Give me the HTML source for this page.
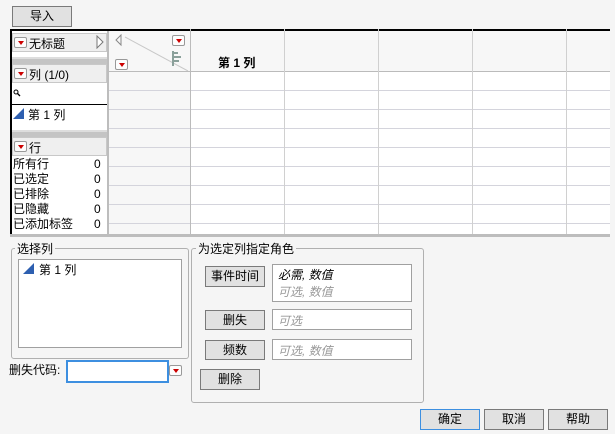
<!DOCTYPE html>
<html><head><meta charset="utf-8"><style>
*{box-sizing:border-box;margin:0;padding:0}
body{width:615px;height:434px;background:#f5f5f5;font-family:"Liberation Sans","Noto Sans CJK SC",sans-serif;font-size:12px;color:#000;position:relative;overflow:hidden}
.a{position:absolute}
.btn{position:absolute;background:#e1e1e1;border:1px solid #7a7a7a;text-align:center;font-size:12px}
.dd{position:absolute;width:13px;height:11px;background:#fdfdfd;border:1px solid #999;border-radius:2px}
.dd:after{content:"";position:absolute;left:3px;top:3px;border-left:3px solid transparent;border-right:3px solid transparent;border-top:4px solid #c00}
.hdr{position:absolute;left:12px;width:95px;height:19px;background:#efefef;border:1px solid #c8c8c8}
.tri{position:absolute;width:0;height:0;border-left:11px solid transparent;border-bottom:11px solid #2d5fb0}
.hl{position:absolute;left:108px;width:502px;height:1px;background:#d4d4dc}
.vl{position:absolute;top:29px;width:1px;height:206px;background:#d0d0d0}
.box{position:absolute;background:#fff;border:1px solid #a0a0a0}
.ph{color:#999;font-style:italic;font-size:12px}
</style></head><body>
<div class="btn" style="left:12px;top:6px;width:60px;height:21px;line-height:19px">导入</div>

<div class="a" style="left:10px;top:29px;width:600px;height:206px;background:#fff;border-top:2px solid #000"></div>
<div class="a" style="left:108px;top:31px;width:502px;height:40px;background:#f7f7f7"></div>
<div class="a" style="left:108px;top:71px;width:82px;height:164px;background:#f7f7f7"></div>
<div class="hl" style="top:71px;background:#bbb"></div>
<div class="hl" style="top:90px"></div><div class="hl" style="top:109px"></div><div class="hl" style="top:128px"></div>
<div class="hl" style="top:147px"></div><div class="hl" style="top:166px"></div><div class="hl" style="top:185px"></div>
<div class="hl" style="top:204px"></div><div class="hl" style="top:223px"></div>
<div class="vl" style="left:190px;background:#bbb"></div><div class="vl" style="left:284px"></div><div class="vl" style="left:378px"></div><div class="vl" style="left:472px"></div><div class="vl" style="left:566px"></div>
<div class="a" style="left:610px;top:29px;width:5px;height:206px;background:#f5f5f5"></div>
<svg class="a" style="left:108px;top:31px" width="82" height="40"><path d="M17 6L80 40" stroke="#c8c8c8"/><path d="M13 4L8 9L13 14Z" fill="none" stroke="#888"/><path d="M64 21h1v14M65 22h5M65 26h8M65 30h6" stroke="#8aa09a" stroke-width="2" fill="none"/></svg>
<div class="dd" style="left:172px;top:35px"></div>
<div class="dd" style="left:115px;top:59px"></div>
<div class="a" style="left:218px;top:54px;font-weight:bold">第 1 列</div>

<div class="a" style="left:12px;top:31px;width:95px;height:204px;background:#fff"></div>
<div class="a" style="left:107px;top:31px;width:2px;height:204px;background:#bdbdbd"></div>
<div class="hdr" style="top:33px"></div><div class="dd" style="left:14px;top:37px"></div>
<div class="a" style="left:29px;top:35px">无标题</div>
<svg class="a" style="left:95px;top:35px" width="10" height="14"><path d="M2 1L8 7L2 13Z" fill="#fff" stroke="#777"/></svg>
<div class="a" style="left:12px;top:57px;width:95px;height:7px;background:#c4c4c4;border-top:2px solid #ddd"></div>
<div class="hdr" style="top:64px"></div><div class="dd" style="left:14px;top:68px"></div>
<div class="a" style="left:29px;top:66px">列 (1/0)</div>
<svg class="a" style="left:13px;top:89px" width="8" height="8"><circle cx="3" cy="3" r="2" fill="none" stroke="#000"/><path d="M4.5 4.5L7 7" stroke="#000" stroke-width="1.3"/></svg>
<div class="a" style="left:12px;top:104px;width:95px;height:1px;background:#000"></div>
<div class="tri" style="left:13px;top:108px"></div><div class="a" style="left:28px;top:106px">第 1 列</div>
<div class="a" style="left:12px;top:130px;width:95px;height:7px;background:#c4c4c4;border-top:2px solid #ddd"></div>
<div class="hdr" style="top:137px"></div><div class="dd" style="left:14px;top:141px"></div>
<div class="a" style="left:29px;top:139px">行</div>
<div class="a" style="left:13px;top:157px;line-height:15px">所有行<br>已选定<br>已排除<br>已隐藏<br>已添加标签</div>
<div class="a" style="left:94px;top:157px;line-height:15px">0<br>0<br>0<br>0<br>0</div>
<div class="a" style="left:10px;top:29px;width:2px;height:206px;background:#000"></div>
<div class="a" style="left:10px;top:234px;width:600px;height:3px;background:#bdbdbd"></div>

<div class="a" style="left:11px;top:248px;width:178px;height:111px;border:1px solid #b0b0b0;border-radius:3px"></div>
<div class="a" style="left:15px;top:240px;background:#f5f5f5;padding:0 2px">选择列</div>
<div class="box" style="left:18px;top:259px;width:164px;height:89px"></div>
<div class="tri" style="left:23px;top:263px"></div><div class="a" style="left:39px;top:261px">第 1 列</div>
<div class="a" style="left:9px;top:361px">删失代码:</div>
<div class="a" style="left:66px;top:360px;width:103px;height:23px;background:#fff;border:2px solid #3d8fe0"></div>
<div class="dd" style="left:169px;top:365px"></div>

<div class="a" style="left:191px;top:248px;width:233px;height:155px;border:1px solid #b0b0b0;border-radius:3px"></div>
<div class="a" style="left:196px;top:240px;background:#f5f5f5;padding:0 2px">为选定列指定角色</div>
<div class="btn" style="left:205px;top:266px;width:60px;height:21px;line-height:19px">事件时间</div>
<div class="box" style="left:272px;top:264px;width:140px;height:38px;padding:2px 0 0 5px;line-height:17px"><i style="font-size:12px">必需, 数值</i><br><span class="ph">可选, 数值</span></div>
<div class="btn" style="left:205px;top:310px;width:60px;height:20px;line-height:18px">删失</div>
<div class="box" style="left:272px;top:309px;width:140px;height:21px;padding:2px 5px"><span class="ph">可选</span></div>
<div class="btn" style="left:205px;top:340px;width:60px;height:20px;line-height:18px">频数</div>
<div class="box" style="left:272px;top:339px;width:140px;height:21px;padding:2px 5px"><span class="ph">可选, 数值</span></div>
<div class="btn" style="left:200px;top:369px;width:60px;height:21px;line-height:19px">删除</div>

<div class="btn" style="left:420px;top:409px;width:60px;height:21px;line-height:19px;border-color:#3d8fe0">确定</div>
<div class="btn" style="left:484px;top:409px;width:60px;height:21px;line-height:19px">取消</div>
<div class="btn" style="left:548px;top:409px;width:60px;height:21px;line-height:19px">帮助</div>
</body></html>
